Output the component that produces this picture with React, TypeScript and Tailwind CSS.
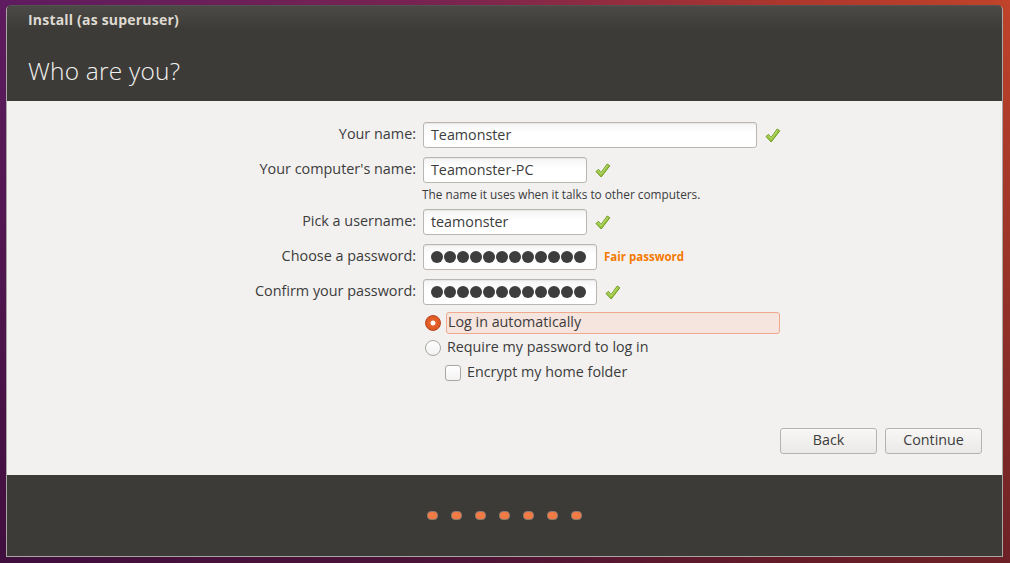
import React from "react";

const font = { fontFamily: '"Open Sans", "Noto Sans", "DejaVu Sans", sans-serif' };

function Check() {
  return (
    <svg width="17" height="17" viewBox="0 0 17 17" className="shrink-0">
      <path
        d="M2 9.5 L4.6 7.4 L7 10.6 L13.2 2 L15.8 3.8 L7.2 15 Z"
        fill="#9cc743"
        stroke="#6e9a1f"
        strokeWidth="1"
        strokeLinejoin="round"
      />
      <path d="M3.5 9.3 L4.6 8.5 L7 11.7 L13.4 3.2" fill="none" stroke="#c6e483" strokeWidth="0.8" />
    </svg>
  );
}

function Input({ width, children }: { width: string; children: React.ReactNode }) {
  return (
    <div
      className={`${width} h-[26px] shrink-0 rounded-[3px] border border-[#b9b6b1] bg-[linear-gradient(to_bottom,#f4f4f4,#ffffff_40%)] pl-[7px] flex items-center text-[14.3px] text-[#3c3c3c] shadow-[inset_0_1px_1px_rgba(0,0,0,0.06)]`}
    >
      {children}
    </div>
  );
}

function Dots() {
  return (
    <div className="flex gap-[1px]">
      {Array.from({ length: 12 }).map((_, i) => (
        <div key={i} className="w-[12px] h-[12px] rounded-full bg-[#3d3d3d]" />
      ))}
    </div>
  );
}

function Row({ label, children }: { label: string; children: React.ReactNode }) {
  return (
    <div className="flex items-center">
      <div className="w-[409px] text-right text-[14.4px] leading-[20px] text-[#3c3c3c] shrink-0 -mt-[2px]">{label}</div>
      <div className="ml-[7px] flex items-center gap-[7px]">{children}</div>
    </div>
  );
}

export default function App() {
  return (
    <div
      style={font}
      className="w-[1010px] h-[563px] overflow-hidden bg-[linear-gradient(to_bottom,rgba(0,0,0,0)_0%,rgba(40,5,35,0.55)_100%),linear-gradient(to_right,#5e1b5f_0%,#7a2450_45%,#ad372d_78%,#c0432a_100%)] pl-[6px] pt-[5px] pr-[7px] pb-[6px]"
    >
      <div className="w-full h-full flex flex-col rounded-t-[5px] border border-[#a9a7a3] border-t-[#55534f] overflow-hidden">
        {/* Header */}
        <div className="h-[95px] shrink-0 bg-[linear-gradient(to_bottom,#4b4a46_0%,#3c3b37_25%,#3c3b37_100%)] pl-[21px] pt-[5px]">
          <div className="text-[14px] font-bold text-[#dfdbd2] leading-[18px] tracking-[0.2px]">Install (as superuser)</div>
          <div className="mt-[27px] text-[24.5px] font-light text-[#f2f1ef] leading-[30px] tracking-[0.2px]">Who are you?</div>
        </div>

        {/* Content */}
        <div className="flex-1 bg-[#f2f1f0] flex flex-col pt-[21px]">
          <Row label="Your name:">
            <Input width="w-[334px]">Teamonster</Input>
            <Check />
          </Row>
          <div className="h-[9px]" />
          <Row label="Your computer's name:">
            <Input width="w-[164px]">Teamonster-PC</Input>
            <Check />
          </Row>
          <div className="ml-[415px] mt-[3px] text-[11.8px] text-[#3c3c3c] leading-[17px]">
            The name it uses when it talks to other computers.
          </div>
          <div className="h-[6px]" />
          <Row label="Pick a username:">
            <Input width="w-[164px]">teamonster</Input>
            <Check />
          </Row>
          <div className="h-[9px]" />
          <Row label="Choose a password:">
            <Input width="w-[174px]">
              <Dots />
            </Input>
            <span className="text-[11.5px] font-bold text-[#f57900]">Fair password</span>
          </Row>
          <div className="h-[9px]" />
          <Row label="Confirm your password:">
            <Input width="w-[174px]">
              <Dots />
            </Input>
            <Check />
          </Row>

          {/* Radios */}
          <div className="ml-[418px] mt-[7px] flex flex-col">
            <div className="flex items-center h-[22px] gap-[5px]">
              <div className="w-[16px] h-[16px] rounded-full bg-[radial-gradient(circle,#ffffff_0%,#ffffff_22%,#e8622c_28%,#d5501e_100%)] border border-[#b8461c] shrink-0" />
              <div className="w-[334px] h-[22px] rounded-[3px] border border-[#f1a98c] bg-[#f6e4de] pl-[1px] flex items-center text-[14.3px] text-[#3c3c3c] -mt-[0px]">
                <span className="-mt-[2px]">Log in automatically</span>
              </div>
            </div>
            <div className="flex items-center h-[22px] gap-[6px] mt-[3px]">
              <div className="w-[16px] h-[16px] rounded-full border border-[#a9a7a3] bg-[linear-gradient(to_bottom,#ffffff,#f2f2f2)] shrink-0" />
              <span className="text-[14.3px] text-[#3c3c3c] -mt-[2px]">Require my password to log in</span>
            </div>
            <div className="flex items-center h-[22px] gap-[6px] mt-[3px] ml-[20px]">
              <div className="w-[16px] h-[16px] rounded-[3px] border border-[#a9a7a3] bg-[linear-gradient(to_bottom,#ffffff,#f2f2f2)] shrink-0" />
              <span className="text-[14.3px] text-[#3c3c3c] -mt-[2px]">Encrypt my home folder</span>
            </div>
          </div>

          <div className="flex-1" />
          <div className="flex justify-end gap-[8px] pr-[20px] pb-[21px]">
            <button className="w-[97px] h-[26px] rounded-[3px] border border-[#b6b3ae] bg-[linear-gradient(to_bottom,#f8f7f6,#ebe9e7)] text-[14.3px] text-[#3c3c3c] pb-[2px]">
              Back
            </button>
            <button className="w-[97px] h-[26px] rounded-[3px] border border-[#b6b3ae] bg-[linear-gradient(to_bottom,#f8f7f6,#ebe9e7)] text-[14.3px] text-[#3c3c3c] pb-[2px]">
              Continue
            </button>
          </div>
        </div>

        {/* Footer */}
        <div className="h-[81px] shrink-0 bg-[#3c3b37] flex items-center justify-center">
          <div className="flex gap-[13px]">
            {Array.from({ length: 7 }).map((_, i) => (
              <div key={i} className="w-[11px] h-[9px] rounded-[4px] bg-[#f27a45] border border-[#8a7a70]" />
            ))}
          </div>
        </div>
      </div>
    </div>
  );
}
